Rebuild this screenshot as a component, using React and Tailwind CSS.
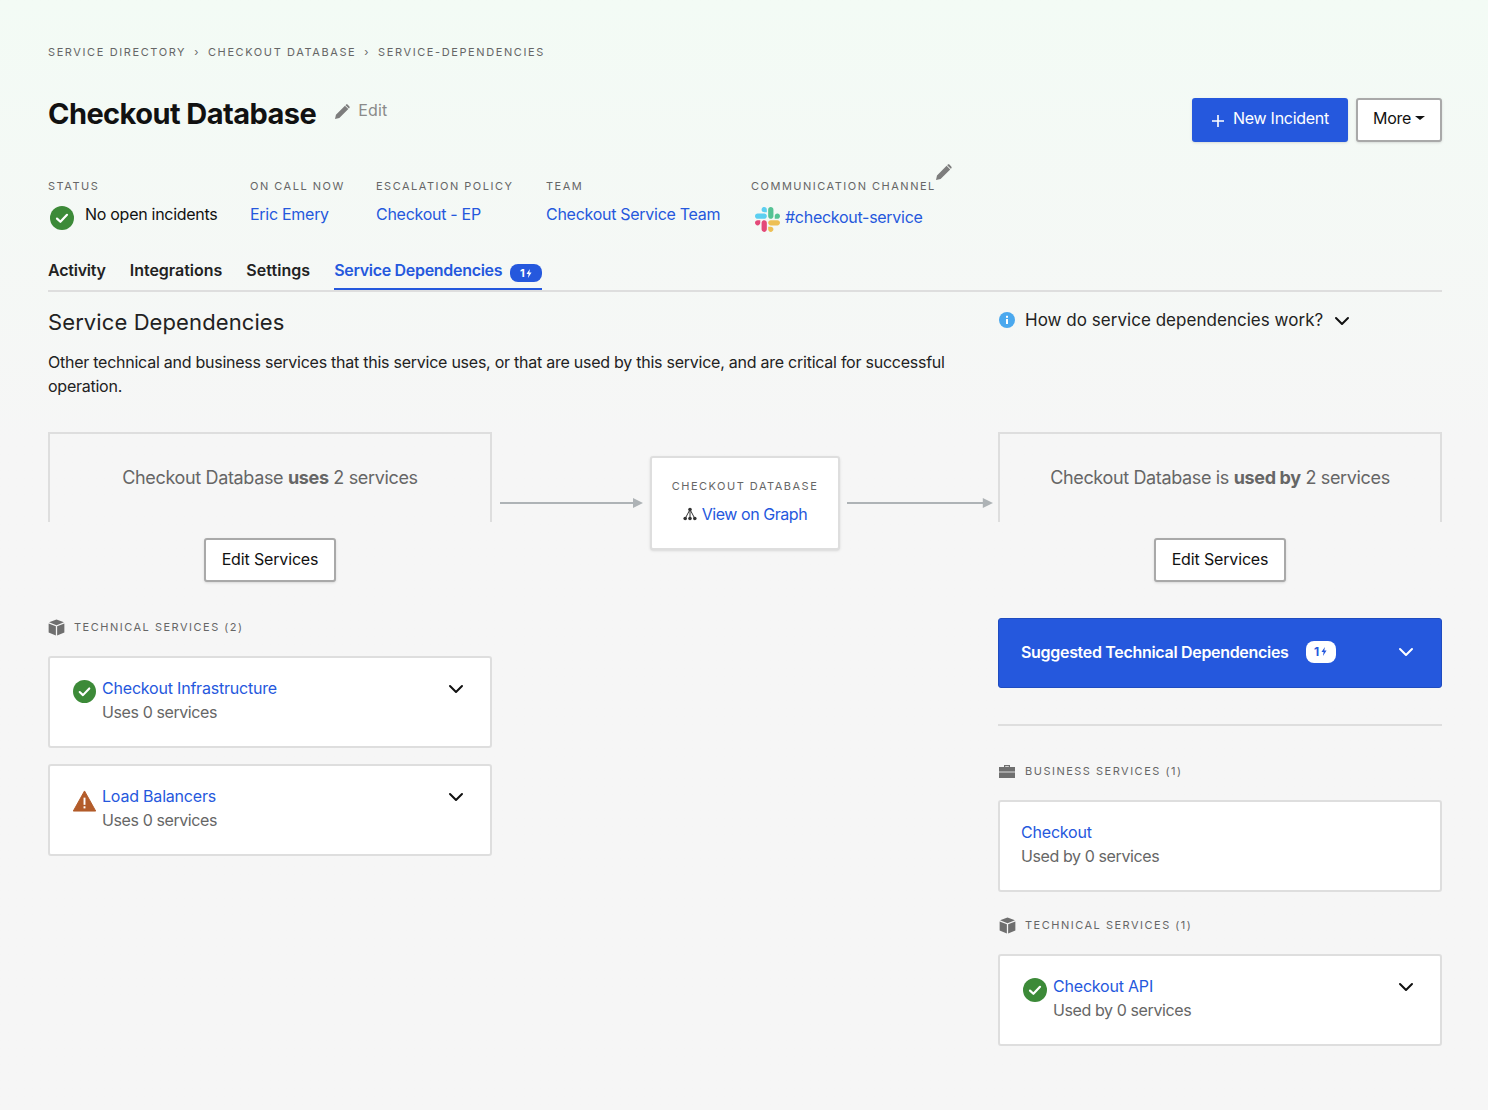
import React from "react"

const BLUE = "text-[#2558dd]"

function Check({ className }) {
  return (
    <svg viewBox="0 0 24 24" className={className}>
      <circle cx="12" cy="12" r="12" fill="#3c8a38" />
      <path d="M7 12.6l3.4 3.2L17 8.8" fill="none" stroke="#fff" strokeWidth="2.2" strokeLinecap="round" strokeLinejoin="round" />
    </svg>
  )
}

function Warning({ className }) {
  return (
    <svg viewBox="0 0 24 22" className={className}>
      <path d="M12 .5L23.7 21.5H.3z" fill="#b35c2a" stroke="#b35c2a" strokeLinejoin="round" />
      <rect x="11" y="7.5" width="2" height="7.5" fill="#fff" />
      <rect x="11" y="16.5" width="2" height="2.2" fill="#fff" />
    </svg>
  )
}

function Pencil({ className }) {
  return (
    <svg viewBox="0 0 16 16" className={className}>
      <path d="M0 16l1-4.6L10.6 1.8l3.6 3.6L4.6 15z M11.6.8c.6-.6 1.4-.6 2 0l1.6 1.6c.6.6.6 1.4 0 2l-.4.4-3.6-3.6z" fill="#7d7d7d" />
    </svg>
  )
}

function Chevron({ white }) {
  return (
    <svg viewBox="0 0 16 10" className="w-[16px] h-[10px]">
      <path d="M2 2l6 6 6-6" fill="none" stroke={white ? "#fff" : "#111"} strokeWidth="2" strokeLinecap="round" strokeLinejoin="round" />
    </svg>
  )
}

function Cube() {
  return (
    <svg viewBox="0 0 16 16" className="w-[17px] h-[17px] shrink-0">
      <path d="M8 .4l7 2.7L8 5.9 1 3.1z" fill="#6f6f6f" />
      <path d="M.6 4.2l6.8 2.7v8.7L.6 12.6z M15.4 4.2L8.6 6.9v8.7l6.8-3z" fill="#6f6f6f" />
    </svg>
  )
}

function Briefcase() {
  return (
    <svg viewBox="0 0 16 14" className="w-[16px] h-[14px] shrink-0">
      <path d="M5 3V1h6v2h-1.2V2.2H6.2V3z" fill="#6f6f6f" />
      <rect x="0" y="3" width="16" height="4.6" fill="#6f6f6f" />
      <rect x="0" y="8.4" width="16" height="5.6" fill="#6f6f6f" />
    </svg>
  )
}

function Bolt({ color }) {
  return (
    <svg viewBox="0 0 8 12" className="w-[6px] h-[9px]">
      <path d="M5.2 0L.6 6.8h2.9L2.6 12l4.8-7.2H4.4z" fill={color} />
    </svg>
  )
}

function GraphIcon() {
  return (
    <svg viewBox="0 0 14 14" className="w-[14px] h-[14px] shrink-0">
      <path d="M7 2.5L2.2 11.5M7 2.5l0 9M7 2.5l4.8 9" stroke="#333" strokeWidth="1" fill="none" />
      <circle cx="7" cy="2.5" r="1.8" fill="#333" />
      <circle cx="2.2" cy="11.5" r="1.8" fill="#333" />
      <circle cx="7" cy="11.5" r="1.8" fill="#333" />
      <circle cx="11.8" cy="11.5" r="1.8" fill="#333" />
    </svg>
  )
}

function Slack() {
  return (
    <svg viewBox="0 0 122.8 122.8" className="w-[25px] h-[25px] mt-[3px] shrink-0 opacity-80">
      <path d="M25.8 77.6c0 7.1-5.8 12.9-12.9 12.9S0 84.7 0 77.6s5.8-12.9 12.9-12.9h12.9v12.9zm6.5 0c0-7.1 5.8-12.9 12.9-12.9s12.9 5.8 12.9 12.9v32.3c0 7.1-5.8 12.9-12.9 12.9s-12.9-5.8-12.9-12.9V77.6z" fill="#e01e5a" />
      <path d="M45.2 25.8c-7.1 0-12.9-5.8-12.9-12.9S38.1 0 45.2 0s12.9 5.8 12.9 12.9v12.9H45.2zm0 6.5c7.1 0 12.9 5.8 12.9 12.9s-5.8 12.9-12.9 12.9H12.9C5.8 58.1 0 52.3 0 45.2s5.8-12.9 12.9-12.9h32.3z" fill="#36c5f0" />
      <path d="M97 45.2c0-7.1 5.8-12.9 12.9-12.9s12.9 5.8 12.9 12.9-5.8 12.9-12.9 12.9H97V45.2zm-6.5 0c0 7.1-5.8 12.9-12.9 12.9s-12.9-5.8-12.9-12.9V12.9C64.7 5.8 70.5 0 77.6 0s12.9 5.8 12.9 12.9v32.3z" fill="#2eb67d" />
      <path d="M77.6 97c7.1 0 12.9 5.8 12.9 12.9s-5.8 12.9-12.9 12.9-12.9-5.8-12.9-12.9V97h12.9zm0-6.5c-7.1 0-12.9-5.8-12.9-12.9s5.8-12.9 12.9-12.9h32.3c7.1 0 12.9 5.8 12.9 12.9s-5.8 12.9-12.9 12.9H77.6z" fill="#ecb22e" />
    </svg>
  )
}

function Arrow({ className }) {
  return (
    <svg viewBox="0 0 143 10" preserveAspectRatio="none" className={className}>
      <rect x="0" y="4" width="134" height="2" fill="#aeb3b6" />
      <path d="M133 0l10 5-10 5z" fill="#aeb3b6" />
    </svg>
  )
}

function Label({ children, className = "" }) {
  return <div className={`text-[11px] leading-[16px] tracking-[1.5px] uppercase text-[#666] ${className}`}>{children}</div>
}

function Meta({ label, value, width }) {
  return (
    <div className={width}>
      <Label>{label}</Label>
      <a className={`block mt-[8px] text-[16px] leading-[24px] ${BLUE}`}>{value}</a>
    </div>
  )
}

function ServiceBox({ children }) {
  return (
    <div>
      <div className="h-[90px] border-2 border-b-0 border-[#dedede] flex items-center justify-center pb-[1px] text-[18px] tracking-[-0.35px] text-[#666]">
        <span>{children}</span>
      </div>
      <div className="flex justify-center mt-[16px]">
        <button className="h-[44px] w-[132px] pb-[3px] bg-white border-2 border-[#a9a9a9] rounded-[3px] shadow-sm text-[16px] tracking-[-0.15px] text-[#111]">Edit Services</button>
      </div>
    </div>
  )
}

function SectionLabel({ icon, children, gap }) {
  return (
    <div className={`flex items-center h-[18px] ${gap}`}>
      {icon}
      <Label>{children}</Label>
    </div>
  )
}

function ServiceCard({ status, name, sub, iconClass = "w-[23px] h-[23px] mt-[4px] ml-[2px] mr-[6px]", indent = "" }) {
  return (
    <div className="h-[92px] bg-white border-2 border-[#dedede] rounded-[3px] pl-[21px] pr-[26px] pt-[18px] flex justify-between">
      <div className="flex">
        {status === "ok" && <Check className={`shrink-0 ${iconClass}`} />}
        {status === "warn" && <Warning className="w-[23px] h-[22px] mt-[6px] ml-[2px] mr-[6px] shrink-0" />}
        <div className={indent}>
          <a className={`block text-[16px] leading-[24px] tracking-[-0.2px] ${BLUE}`}>{name}</a>
          <div className="text-[16px] leading-[24px] tracking-[-0.4px] text-[#666]">{sub}</div>
        </div>
      </div>
      {status && <div className="mt-[8px]"><Chevron /></div>}
    </div>
  )
}

export default function App() {
  return (
    <div className="min-h-[1110px] pl-[48px] pr-[46px] pt-[44px] bg-gradient-to-b from-[#f3fbf5] to-[#f6f6f6] to-[40%] font-['Inter',sans-serif] tracking-[-0.28px] text-[#111]">
      {/* Breadcrumb */}
      <div className="flex items-center text-[11px] leading-[16px] tracking-[1.6px] uppercase text-[#666]">
        <span>Service Directory</span>
        <span className="mx-[8px]">›</span>
        <span>Checkout Database</span>
        <span className="mx-[8px]">›</span>
        <span>Service-Dependencies</span>
      </div>

      {/* Header */}
      <div className="flex justify-between mt-[38px]">
        <div className="flex items-start">
          <h1 className="text-[29px] leading-[44px] font-bold tracking-[-0.56px] text-[#111] mt-[-6px]">Checkout Database</h1>
          <Pencil className="w-[15px] h-[15px] ml-[19px] mt-[6px]" />
          <span className="text-[16px] leading-[24px] tracking-[0.2px] text-[#8a8a8a] ml-[8px]">Edit</span>
        </div>
        <div className="flex gap-[8px]">
          <button className="h-[44px] w-[156px] pb-[4px] rounded-[3px] bg-[#2558dd] text-white text-[16px] flex items-center justify-center gap-[8px] shadow-sm">
            <svg viewBox="0 0 14 14" className="w-[14px] h-[14px] mt-[5px]"><path d="M7 1v12M1 7h12" stroke="#fff" strokeWidth="1.6" /></svg>
            New Incident
          </button>
          <button className="h-[44px] w-[86px] pb-[4px] rounded-[3px] bg-white border-2 border-[#a9a9a9] text-[16px] text-[#111] flex items-center justify-center gap-[4px] shadow-sm">
            More
            <span className="w-0 h-0 border-x-[5px] border-x-transparent border-t-[4px] border-t-[#111]" />
          </button>
        </div>
      </div>

      {/* Meta */}
      <div className="flex mt-[36px] h-[62px]">
        <div className="w-[202px]">
          <Label>Status</Label>
          <div className="flex mt-[8px] text-[16px] leading-[24px] text-[#111]">
            <Check className="w-[24px] h-[24px] mt-[4px] ml-[2px] mr-[11px] shrink-0" />
            No open incidents
          </div>
        </div>
        <Meta label="On Call Now" value="Eric Emery" width="w-[126px]" />
        <Meta label="Escalation Policy" value="Checkout - EP" width="w-[170px]" />
        <Meta label="Team" value="Checkout Service Team" width="w-[205px]" />
        <div>
          <div className="flex items-start">
            <Label>Communication Channel</Label>
            <Pencil className="w-[16px] h-[16px] mt-[-14px]" />
          </div>
          <div className="flex items-start mt-[10px] ml-[4px]">
            <Slack />
            <a className={`ml-[5px] mt-[1px] text-[16px] leading-[24px] ${BLUE}`}>#checkout-service</a>
          </div>
        </div>
      </div>

      {/* Tabs */}
      <div className="flex gap-[24px] mt-[18px] h-[34px] border-b-2 border-[#dedede] text-[16px] leading-[24px] font-semibold text-[#222]">
        <a className="tracking-[-0.22px]">Activity</a>
        <a className="tracking-[-0.02px]">Integrations</a>
        <a className="tracking-[0.05px]">Settings</a>
        <a className={`flex items-start h-[32px] border-b-2 border-[#2558dd] tracking-[-0.3px] ${BLUE}`}>
          Service Dependencies
          <span className="ml-[8px] mt-[6px] h-[18px] w-[32px] rounded-[8px] bg-[#2558dd] text-white text-[11px] leading-[18px] font-bold flex items-center justify-center gap-[2px]">
            1<Bolt color="#fff" />
          </span>
        </a>
      </div>

      {/* Intro */}
      <div className="flex justify-between mt-[15px]">
        <div className="w-[905px]">
          <h2 className="text-[22px] leading-[30px] tracking-[0.1px] text-[#222]">Service Dependencies</h2>
          <p className="mt-[13px] text-[16px] leading-[24px] tracking-[-0.25px] text-[#222]">
            Other technical and business services that this service uses, or that are used by this service, and are critical for successful operation.
          </p>
        </div>
        <div className="w-[444px] flex items-center h-[24px] mt-[2px] text-[17px] tracking-[0.03px] text-[#222]">
          <svg viewBox="0 0 16 16" className="w-[16px] h-[16px] ml-[1px] mr-[10px] mt-[-2px]">
            <circle cx="8" cy="8" r="8" fill="#4aa8ee" />
            <rect x="7" y="7" width="2" height="5" fill="#fff" />
            <rect x="7" y="3.8" width="2" height="2" fill="#fff" />
          </svg>
          How do service dependencies work?
          <span className="ml-[11px] flex"><Chevron /></span>
        </div>
      </div>

      {/* Dependencies */}
      <div className="grid grid-cols-[444px_1fr_444px] mt-[34px]">
        <div>
          <ServiceBox>Checkout Database <b className="font-bold">uses</b> 2 services</ServiceBox>
          <SectionLabel icon={<Cube />} gap="gap-[9px] mt-[36px]">Technical Services (2)</SectionLabel>
          <div className="mt-[20px] flex flex-col gap-[16px]">
            <ServiceCard status="ok" name="Checkout Infrastructure" sub="Uses 0 services" />
            <ServiceCard status="warn" name="Load Balancers" sub="Uses 0 services" />
          </div>
        </div>

        <div className="flex items-start pt-[24px]">
          <Arrow className="w-[143px] h-[10px] mt-[42px] ml-[8px] shrink-0" />
          <div className="w-[190px] h-[94px] ml-[7px] shrink-0 bg-white border-2 border-[#dedede] rounded-[3px] shadow-sm flex flex-col items-center pt-[20px]">
            <Label>Checkout Database</Label>
            <div className="flex items-center mt-[8px]">
              <GraphIcon />
              <a className={`ml-[5px] text-[16px] leading-[24px] tracking-[-0.45px] ${BLUE}`}>View on Graph</a>
            </div>
          </div>
          <Arrow className="w-[146px] h-[10px] mt-[42px] ml-[7px] shrink-0" />
        </div>

        <div>
          <ServiceBox>Checkout Database is <b className="font-bold">used by</b> 2 services</ServiceBox>
          <div className="mt-[36px] h-[70px] pb-[3px] rounded-[3px] bg-[#2558dd] border border-[#1f4cc0] pl-[22px] pr-[27px] flex items-center justify-between text-white">
            <div className="flex items-center">
              <span className="text-[16px] font-semibold tracking-[-0.31px]">Suggested Technical Dependencies</span>
              <span className="ml-[17px] h-[22px] w-[30px] rounded-[8px] bg-white text-[#2558dd] text-[12px] font-bold flex items-center justify-center gap-[2px]">
                1<Bolt color="#2558dd" />
              </span>
            </div>
            <Chevron white />
          </div>
          <div className="mt-[36px] h-[2px] bg-[#dedede]" />
          <SectionLabel icon={<Briefcase />} gap="gap-[10px] pl-[1px] mt-[36px]">Business Services (1)</SectionLabel>
          <div className="mt-[20px]">
            <ServiceCard name="Checkout" sub="Used by 0 services" />
          </div>
          <SectionLabel icon={<Cube />} gap="gap-[9px] pl-[1px] mt-[24px]">Technical Services (1)</SectionLabel>
          <div className="mt-[20px]">
            <ServiceCard status="ok" name="Checkout API" sub="Used by 0 services" iconClass="w-[24px] h-[24px] mt-[4px] ml-[2px] mr-[6px]" />
          </div>
        </div>
      </div>
    </div>
  )
}
